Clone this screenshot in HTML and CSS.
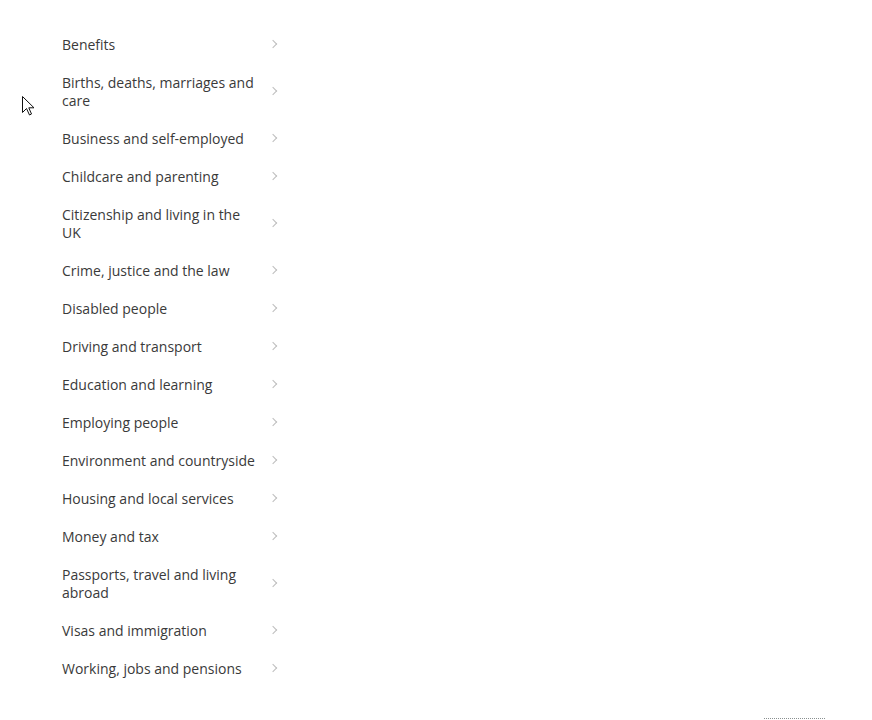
FILE: index.html
```html
<!DOCTYPE html>
<html lang="en">
<head>
<meta charset="utf-8">
<title>Topics</title>
<link rel="stylesheet" href="styles.css">
</head>
<body>
<nav class="topics">
  <ul class="topic-list">
    <li class="topic"><span class="label">Benefits</span><span class="chev"></span></li>
    <li class="topic"><span class="label">Births, deaths, marriages and care</span><span class="chev"></span></li>
    <li class="topic"><span class="label">Business and self-employed</span><span class="chev"></span></li>
    <li class="topic"><span class="label">Childcare and parenting</span><span class="chev"></span></li>
    <li class="topic"><span class="label">Citizenship and living in the UK</span><span class="chev"></span></li>
    <li class="topic"><span class="label">Crime, justice and the law</span><span class="chev"></span></li>
    <li class="topic"><span class="label">Disabled people</span><span class="chev"></span></li>
    <li class="topic"><span class="label">Driving and transport</span><span class="chev"></span></li>
    <li class="topic"><span class="label">Education and learning</span><span class="chev"></span></li>
    <li class="topic"><span class="label">Employing people</span><span class="chev"></span></li>
    <li class="topic"><span class="label">Environment and countryside</span><span class="chev"></span></li>
    <li class="topic"><span class="label">Housing and local services</span><span class="chev"></span></li>
    <li class="topic"><span class="label">Money and tax</span><span class="chev"></span></li>
    <li class="topic"><span class="label">Passports, travel and living abroad</span><span class="chev"></span></li>
    <li class="topic"><span class="label">Visas and immigration</span><span class="chev"></span></li>
    <li class="topic"><span class="label">Working, jobs and pensions</span><span class="chev"></span></li>
  </ul>
  <div class="focus-line"></div>
</nav>
<svg class="cursor" width="13" height="20" viewBox="0 0 13 20" aria-hidden="true">
  <path d="M0.5 0.5 L0.5 16.5 L4.5 12.5 L7.5 19 L9.5 18 L6.8 11.8 L12 11.8 Z" fill="#fff" stroke="#111" stroke-width="1" stroke-linejoin="miter"/>
</svg>
</body>
</html>
```

FILE: styles.css
```css
html, body {
  margin: 0;
  padding: 0;
  background: #fff;
}
body {
  font-family: "Open Sans", "Noto Sans", "Liberation Sans", sans-serif;
  font-size: 14px;
  color: #3a3a3a;
  overflow: hidden;
}
.topics {
  padding: 26px 0 0 62px;
}
.topic-list {
  list-style: none;
  margin: 0;
  padding: 0;
  width: 218px;
}
.topic {
  display: flex;
  align-items: center;
  justify-content: space-between;
  padding: 10px 0;
  line-height: 18px;
}
.label {
  width: 200px;
}
.chev {
  width: 5px;
  height: 5px;
  border-top: 1px solid #bdbdbd;
  border-right: 1px solid #bdbdbd;
  transform: rotate(45deg);
  margin-right: 4px;
  position: relative;
  top: -1px;
}
.focus-line {
  margin: 30px 0 0 702px;
  width: 61px;
  border-top: 1px dotted #8a9090;
}
.cursor {
  position: absolute;
  left: 22px;
  top: 96px;
}
```
